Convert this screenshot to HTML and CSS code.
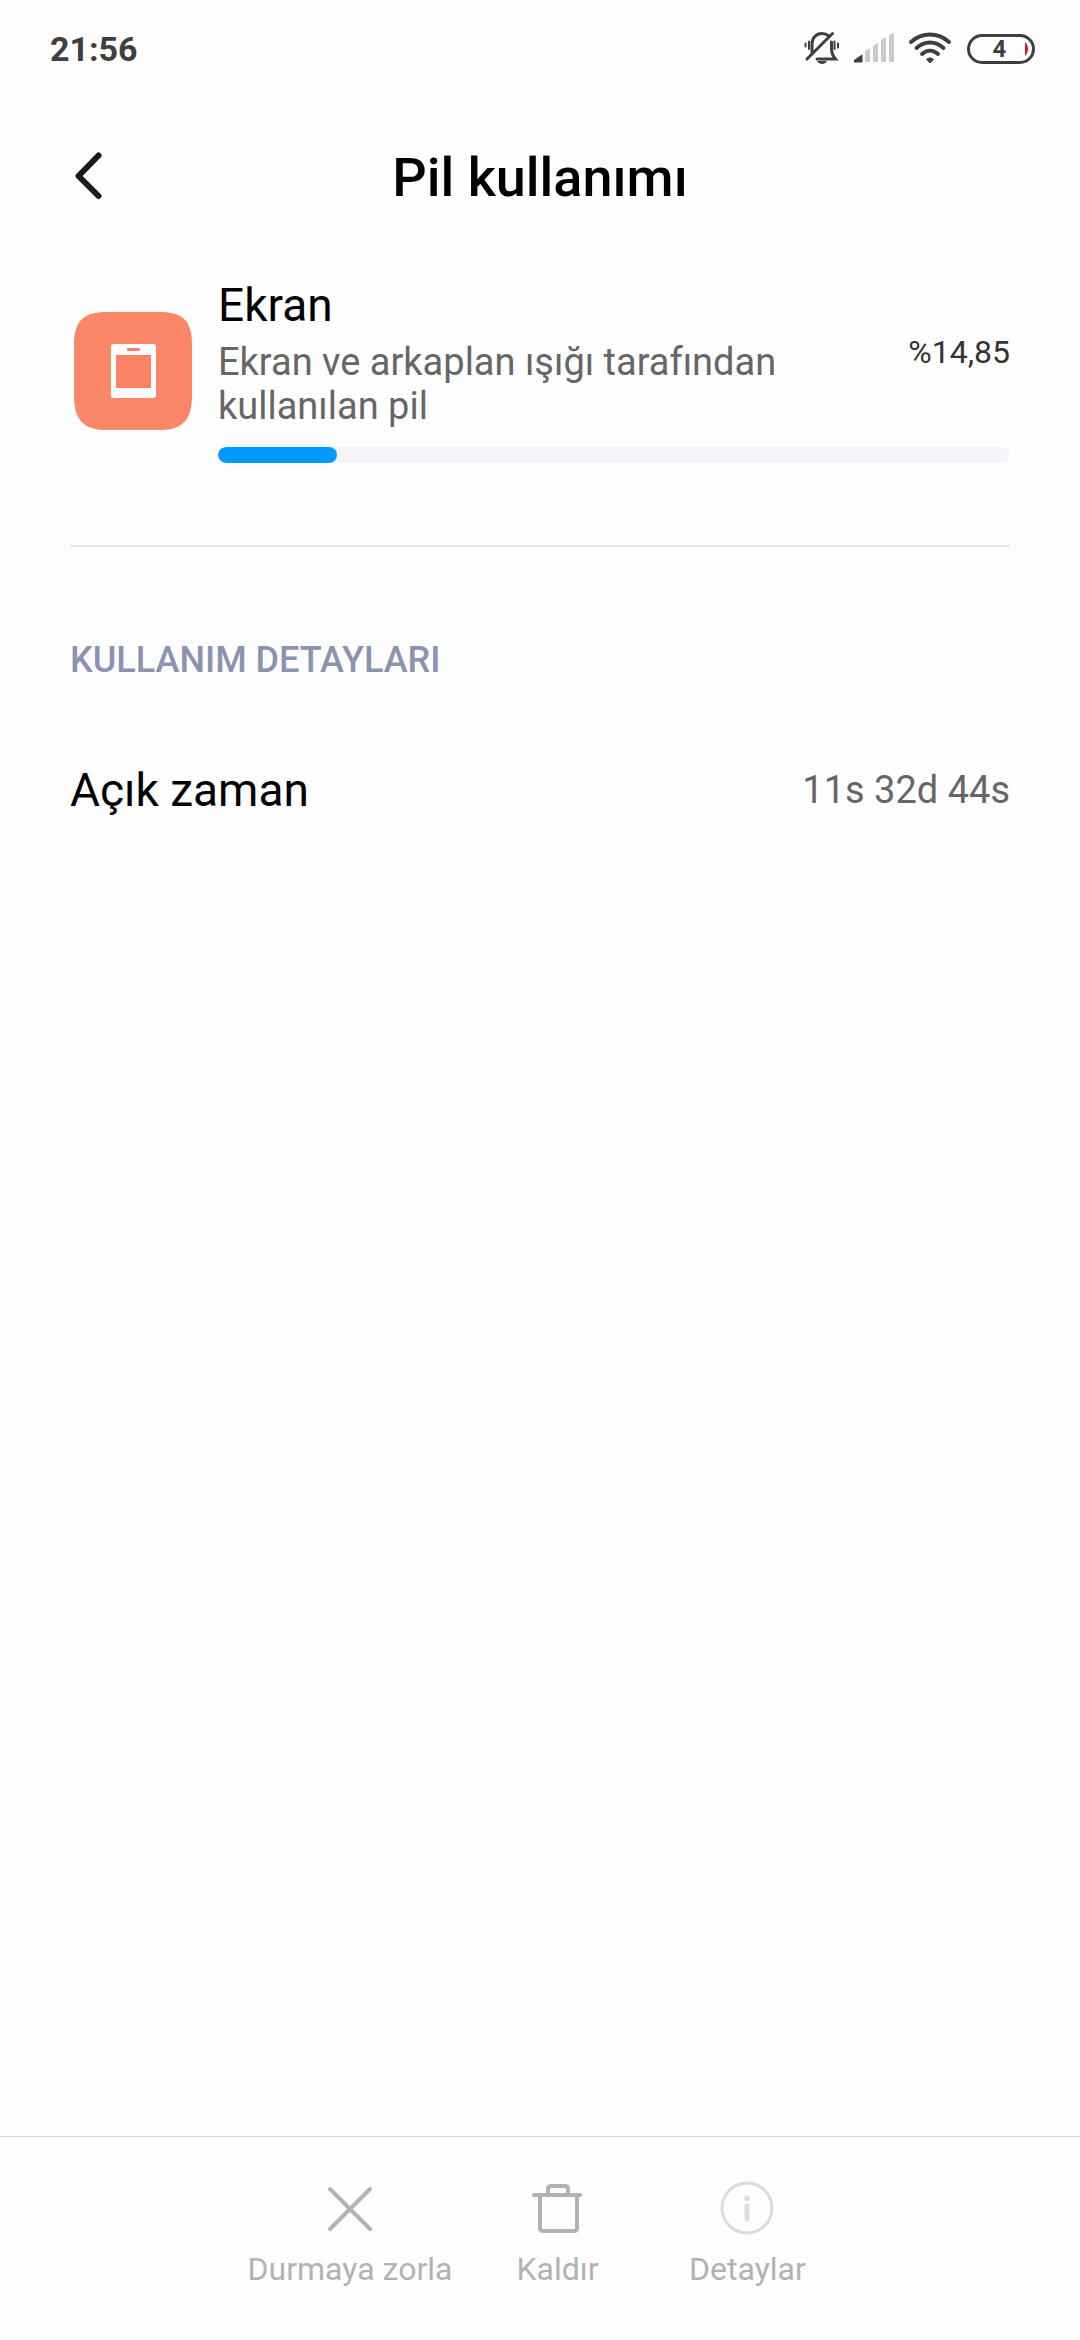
FILE: index.html
```html
<!DOCTYPE html>
<html lang="tr">
<head>
<meta charset="utf-8">
<meta name="viewport" content="width=device-width, initial-scale=1">
<title>Pil kullanımı</title>
<link rel="stylesheet" href="styles.css">
</head>
<body>
<div class="status-bar">
  <time class="clock">21:56</time>
  <div class="status-icons">
    <svg class="status-icon" width="36" height="40" viewBox="0 0 36 40" aria-label="Sessiz">
      <g fill="none" stroke="#3f3f3f" stroke-width="3" stroke-linecap="round">
        <path d="M8 24V15C8 9 12 4.500 18 4.500C21 4.500 23 5.500 25 7"/>
        <path d="M27.500 13V20C27.500 24 29 27 31.500 30H13"/>
        <path d="M3 30L28.500 4.500"/>
        <path d="M1.500 14.500V17.500M5 12.500V20M30.500 12.500V20M34 14.500V18.500" stroke-width="2"/>
      </g>
      <path d="M13 32H23C22 34 20 35 18 35S14 34 13 32Z" fill="#3f3f3f"/>
    </svg>
    <svg class="status-icon signal" width="40" height="40" viewBox="0 0 40 40" aria-label="Sinyal">
      <path d="M0 33V31.500L8 26V33Z" fill="#3f3f3f" stroke="#3f3f3f" stroke-linejoin="round"/>
      <path d="M11 33V22L16 19V33ZM19 33V17L24 14V33ZM27 33V11L32 8V33ZM35 33V6L40 4V33Z" fill="#cbcbcb"/>
    </svg>
    <svg class="status-icon wifi" width="44" height="40" viewBox="0 0 44 40" aria-label="Wi-Fi">
      <g fill="none" stroke="#3f3f3f" stroke-width="4" stroke-linecap="round">
        <path d="M3 13C14 3 30 3 41 13"/>
        <path d="M8.500 19C16.500 11.500 27.500 11.500 35.500 19"/>
        <path d="M14 25C19 20.500 25 20.500 30 25"/>
      </g>
      <path d="M18.500 30.500C20.500 28.500 23.500 28.500 25.500 30.500L22 34Z" fill="#3f3f3f" stroke="#3f3f3f" stroke-linejoin="round"/>
    </svg>
    <div class="battery"><span class="battery-level">4</span>
      <svg class="battery-charge" width="3" height="14" viewBox="0 0 3 14"><path d="M0 0C4 4 4 10 0 14Z" fill="#cf1b22"/></svg>
    </div>
  </div>
</div>

<header class="app-bar">
  <button class="back" type="button" aria-label="Geri">
    <svg width="36" height="52" viewBox="0 0 36 52"><path d="M28.500 3.500L8.500 24L28.500 44" fill="none" stroke="#1a1a1a" stroke-width="6" stroke-linecap="round" stroke-linejoin="round"/></svg>
  </button>
  <h1 class="title">Pil kullanımı</h1>
</header>

<main class="content">
  <section class="summary">
    <svg class="app-icon" width="126" height="126" viewBox="0 0 126 126" aria-hidden="true">
      <path d="M4 39C4 15 13 6 37 6H89C113 6 122 15 122 39V89C122 114 113 124 89 124H37C13 124 4 114 4 89Z" fill="#fb8668"/>
      <rect x="41" y="38" width="45" height="54" rx="3" fill="#fff"/>
      <rect x="46" y="49" width="35" height="33" fill="#f98264"/>
      <rect x="57" y="42" width="13" height="3" rx="1" fill="#f98264"/>
    </svg>
    <div class="summary-body">
      <div class="summary-text">
        <div>
          <h2 class="item-name">Ekran</h2>
          <p class="item-note">Ekran ve arkaplan ışığı tarafından kullanılan pil</p>
        </div>
        <span class="percent">%14,85</span>
      </div>
      <div class="meter"><div class="meter-fill" style="width: 15%"></div></div>
    </div>
  </section>

  <h2 class="section-title">KULLANIM DETAYLARI</h2>
  <dl class="detail">
    <dt class="detail-label">Açık zaman</dt>
    <dd class="detail-value">11s 32d 44s</dd>
  </dl>
</main>

<footer class="actions">
  <button class="action" type="button" disabled>
    <svg width="64" height="64" viewBox="0 0 64 64"><path d="M12 13L52 53M52 13L12 53" fill="none" stroke="#b2b2b2" stroke-width="4" stroke-linecap="round"/></svg>
    Durmaya zorla
  </button>
  <button class="action" type="button" disabled>
    <svg width="64" height="64" viewBox="0 0 64 64"><path d="M9 19H55M15 19V52Q15 55 18 55H49Q52 55 52 52V19M23 19V13Q23 10 26 10H40Q43 10 43 13V19" fill="none" stroke="#b2b2b2" stroke-width="4" stroke-linecap="round"/></svg>
    Kaldır
  </button>
  <button class="action" type="button" disabled>
    <svg width="64" height="64" viewBox="0 0 64 64"><g fill="none" stroke="#dcdcdc" stroke-linecap="round"><circle cx="32" cy="32" r="25" stroke-width="3"/><path d="M32 30V43" stroke-width="5"/></g><circle cx="32" cy="22.500" r="2.800" fill="#dcdcdc"/></svg>
    Detaylar
  </button>
</footer>
</body>
</html>
```

FILE: styles.css
```css
* {
  box-sizing: border-box;
}

body {
  display: flex;
  flex-direction: column;
  min-height: 100vh;
  margin: 0;
  background: #fefefe;
  color: #000;
  font-family: Roboto, "Noto Sans", sans-serif;
}

h1, h2, p, dl, dd {
  margin: 0;
  font-weight: 400;
}

svg {
  display: block;
  flex: none;
}

button {
  padding: 0;
  border: 0;
  background: none;
  font-family: inherit;
}

.status-bar {
  display: flex;
  align-items: center;
  justify-content: space-between;
  height: 98px;
  padding: 0 45px 0 50px;
  color: #3f3f3f;
}

.clock {
  font-size: 34px;
  font-weight: 700;
  line-height: 40px;
}

.status-icons {
  display: flex;
  align-items: center;
}

.signal {
  margin-left: 14px;
}

.wifi {
  margin-left: 14px;
}

.battery {
  display: flex;
  align-items: center;
  justify-content: flex-end;
  width: 68px;
  height: 30px;
  margin-left: 15px;
  padding-right: 4px;
  border: 3px solid #3f3f3f;
  border-radius: 15px;
}

.battery-level {
  flex: 1;
  padding-left: 4px;
  text-align: center;
  font-size: 24px;
  font-weight: 700;
  line-height: 24px;
}

.app-bar {
  display: grid;
  grid-template-columns: 36px 1fr 36px;
  align-items: center;
  height: 160px;
  padding: 0 70px;
}

.title {
  text-align: center;
  font-size: 54px;
  font-weight: 500;
  line-height: 64px;
}

.content {
  padding: 17px 70px 0;
}

.summary {
  display: grid;
  grid-template-columns: 148px 1fr;
  align-items: center;
  padding-bottom: 82px;
  border-bottom: 2px solid #e5e5e5;
}

.summary-text {
  display: grid;
  grid-template-columns: 1fr auto;
  align-items: center;
  column-gap: 80px;
}

.item-name {
  font-size: 46px;
  line-height: 60px;
}

.item-note {
  margin-top: 5px;
  color: #666;
  font-size: 38px;
  line-height: 44px;
}

.percent {
  color: #333;
  font-size: 32px;
  line-height: 40px;
}

.meter {
  height: 16px;
  margin-top: 19px;
  overflow: hidden;
  border-radius: 8px;
  background: #f4f5fa;
}

.meter-fill {
  height: 100%;
  border-radius: 8px;
  background: #0099ff;
}

.section-title {
  margin-top: 89px;
  color: #8c93b0;
  font-size: 36px;
  font-weight: 500;
  line-height: 48px;
}

.detail {
  display: flex;
  align-items: center;
  justify-content: space-between;
  margin-top: 76px;
}

.detail-label {
  font-size: 46px;
  line-height: 60px;
}

.detail-value {
  color: #666;
  font-size: 38px;
  line-height: 60px;
}

.actions {
  display: flex;
  justify-content: center;
  margin-top: auto;
  padding: 39px 0 51px;
  border-top: 1px solid #d8d8d8;
}

.action {
  display: flex;
  flex-direction: column;
  align-items: center;
  gap: 9px;
  min-width: 190px;
  padding: 0 10px;
  color: #b2b2b2;
  font-size: 32px;
  line-height: 40px;
}
```
